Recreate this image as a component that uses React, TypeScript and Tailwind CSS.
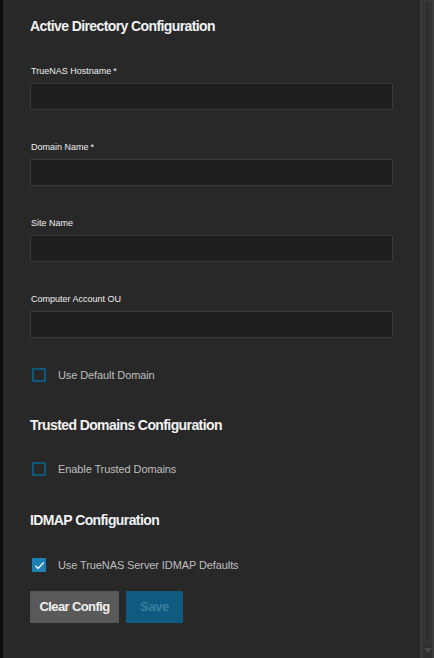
import React from "react";

const font = { fontFamily: '"Liberation Sans", Arial, sans-serif' };

function Field({ label, required, first }: { label: string; required?: boolean; first?: boolean }) {
  return (
    <div className={first ? "mt-[29px]" : "mt-[31px]"}>
      <div className="h-[12px] leading-[12px] text-[9px] font-medium text-[#f0f0f0] pl-[1px]">
        {label}
        {required && <span className="ml-[2px]">*</span>}
      </div>
      <div className="mt-[6px] h-[27px] w-[363px] bg-[#1f1f1f] border border-[#3a3a3a] rounded-[1px]" />
    </div>
  );
}

function Check({ label, checked, className }: { label: string; checked?: boolean; className: string }) {
  return (
    <div className={`flex items-center h-[14px] ${className}`}>
      <div
        className={`ml-[2px] w-[14px] h-[14px] rounded-[1px] flex items-center justify-center ${
          checked ? "bg-[#1f80b3]" : "border-2 border-[#0f5779]"
        }`}
      >
        {checked && (
          <svg width="11" height="11" viewBox="0 0 24 24" fill="none" stroke="#f2f2f2" strokeWidth="3.2">
            <path d="M3 12.5l6 6L21 5.5" />
          </svg>
        )}
      </div>
      <span className="ml-[12px] text-[11px] text-[#bfbfbf] tracking-[-0.1px]">{label}</span>
    </div>
  );
}

function Heading({ children, className = "" }: { children: React.ReactNode; className?: string }) {
  return (
    <h2 className={`h-[20px] leading-[20px] text-[14px] font-bold text-[#f2f2f2] tracking-[-0.6px] ${className}`}>
      {children}
    </h2>
  );
}

export default function App() {
  return (
    <div className="w-[434px] h-[658px] flex overflow-hidden bg-[#282828]" style={font}>
      <div className="w-[3px] bg-[#0c0c0c]" />
      <div className="w-[417px] pl-[27px] pt-[16px]">
        <Heading>Active Directory Configuration</Heading>
        <Field label="TrueNAS Hostname" required first />
        <Field label="Domain Name" required />
        <Field label="Site Name" />
        <Field label="Computer Account OU" />
        <Check label="Use Default Domain" className="mt-[30px]" />
        <Heading className="mt-[33px]">Trusted Domains Configuration</Heading>
        <Check label="Enable Trusted Domains" className="mt-[27px]" />
        <Heading className="mt-[34px]">IDMAP Configuration</Heading>
        <Check label="Use TrueNAS Server IDMAP Defaults" checked className="mt-[28px]" />
        <div className="mt-[19px] flex gap-[7px]">
          <button className="h-[32px] w-[89px] bg-[#595959] text-[13px] font-bold text-[#f0f0f0] tracking-[-0.6px] rounded-[1px]">
            Clear Config
          </button>
          <button className="h-[32px] w-[57px] bg-[#0f5a80] text-[13px] font-bold text-[#3a7d9c] tracking-[-0.4px] rounded-[1px]">
            Save
          </button>
        </div>
      </div>
      <div className="w-[14px] flex">
        <div className="w-[3px] bg-[#3b3b3b]" />
        <div className="w-[9px] bg-[#2f2f2f] relative">
          <div className="absolute left-[1px] right-[1px] top-0 h-[645px] border border-[#3a3a3a] rounded-b-[4px]" />
          <div className="absolute left-[1px] top-[648px] w-0 h-0 border-l-[4px] border-r-[4px] border-t-[5px] border-l-transparent border-r-transparent border-t-[#4a4a4a]" />
        </div>
        <div className="w-[2px] bg-[#3b3b3b]" />
      </div>
    </div>
  );
}
